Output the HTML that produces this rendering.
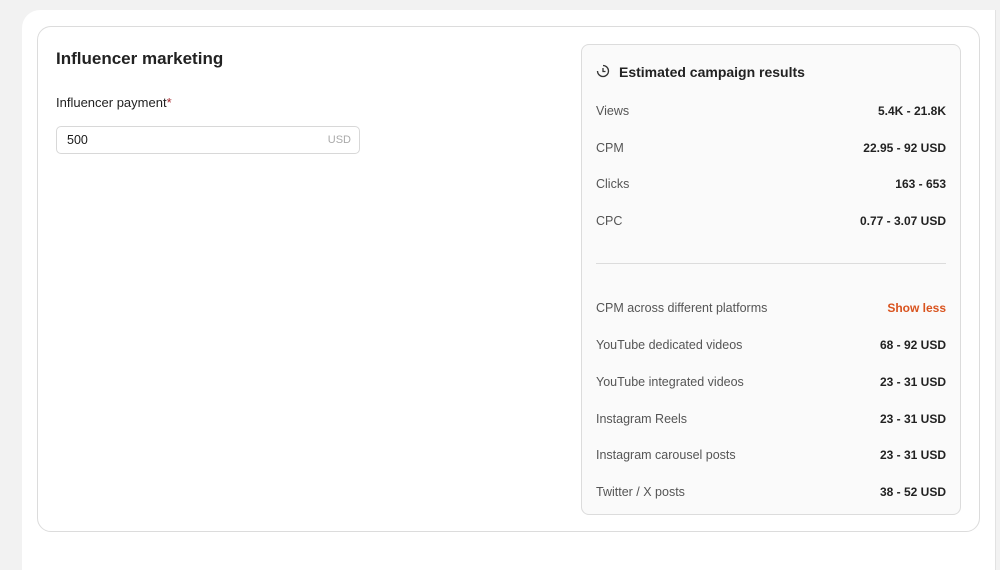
<!DOCTYPE html><html><head><style>
body{margin:0;width:1000px;height:554px;background:#f2f2f2;font-family:"Liberation Sans",sans-serif;position:relative;overflow:hidden;color:#1a1a1a}
.outer{position:absolute;left:22px;top:10px;width:973px;height:560px;background:#fff;border-top-left-radius:18px;border-right:1px solid #e2e2e2}
.inner{position:absolute;left:37px;top:26px;width:941px;height:504px;border:1px solid #dcdcdc;border-radius:14px;background:#fff}
.t{position:absolute;left:56px;top:49px;font-size:17px;font-weight:bold;color:#222}
.l{position:absolute;left:56px;top:95px;font-size:13px;color:#222}
.inp{position:absolute;left:56px;top:126px;width:302px;height:26px;border:1px solid #d8d8d8;border-radius:5px;font-size:12.5px}
.p{position:absolute;left:581px;top:44px;width:378px;height:469px;background:#fafafa;border:1px solid #dcdcdc;border-radius:8px}
.r{position:absolute;left:14px;right:14px;font-size:12.5px;display:flex;justify-content:space-between}
.r span:first-child{color:#555}
.r span:last-child{font-weight:bold;color:#222;font-size:12px}
</style></head><body>
<div class="outer"></div>
<div class="inner"></div>
<div class="t">Influencer marketing</div>
<div class="l">Influencer payment<span style="color:#a4262c">*</span></div>
<div class="inp"><span style="position:absolute;left:10px;top:6px">500</span><span style="position:absolute;right:8px;top:7px;color:#aaa;font-size:11px">USD</span></div>
<div class="p">
<svg style="position:absolute;left:14px;top:19px" width="14" height="14" viewBox="0 0 14 14" fill="none" stroke="#333" stroke-width="1.3"><path d="M7 1.5A5.5 5.5 0 1 1 1.5 7"/><path d="M7 4v3.5h2.5"/></svg>
<div style="position:absolute;left:37px;top:19px;font-size:14px;font-weight:bold;color:#222">Estimated campaign results</div>
<div class="r" style="top:59px"><span>Views</span><span>5.4K - 21.8K</span></div>
<div class="r" style="top:96px"><span>CPM</span><span>22.95 - 92 USD</span></div>
<div class="r" style="top:132px"><span>Clicks</span><span>163 - 653</span></div>
<div class="r" style="top:169px"><span>CPC</span><span>0.77 - 3.07 USD</span></div>
<div style="position:absolute;left:14px;right:14px;top:218px;border-top:1px solid #dcdcdc"></div>
<div class="r" style="top:256px"><span>CPM across different platforms</span><span style="color:#d9531e!important">Show less</span></div>
<div class="r" style="top:293px"><span>YouTube dedicated videos</span><span>68 - 92 USD</span></div>
<div class="r" style="top:330px"><span>YouTube integrated videos</span><span>23 - 31 USD</span></div>
<div class="r" style="top:367px"><span>Instagram Reels</span><span>23 - 31 USD</span></div>
<div class="r" style="top:403px"><span>Instagram carousel posts</span><span>23 - 31 USD</span></div>
<div class="r" style="top:440px"><span>Twitter / X posts</span><span>38 - 52 USD</span></div>
</div>
</body></html>
